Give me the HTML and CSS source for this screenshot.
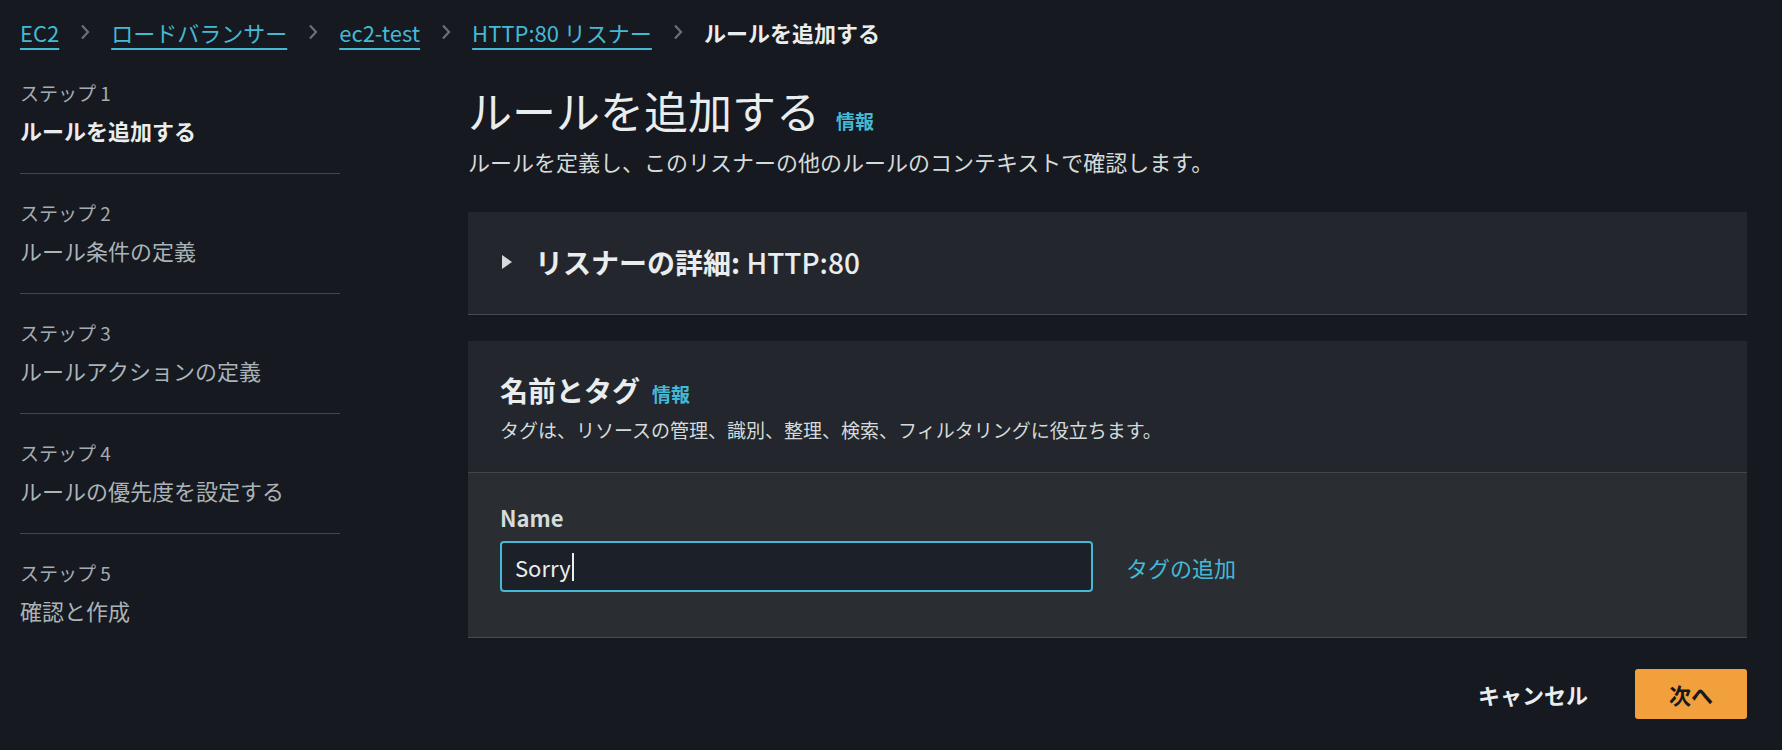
FILE: index.html
```html
<!DOCTYPE html>
<html lang="ja">
  <head>
    <meta charset="UTF-8" />
    <meta name="viewport" content="width=device-width, initial-scale=1.0" />
    <title>ルールを追加する</title>

    <link rel="stylesheet" href="styles.css">
  </head>

  <body>
    <nav class="breadcrumbs">
      <a href="#">EC2</a>
      <svg class="crumb-sep" width="10" height="16" viewBox="0 0 10 16"><path d="M2 1.5 8 8 2 14.5" /></svg>
      <a href="#">ロードバランサー</a>
      <svg class="crumb-sep" width="10" height="16" viewBox="0 0 10 16"><path d="M2 1.5 8 8 2 14.5" /></svg>
      <a href="#">ec2-test</a>
      <svg class="crumb-sep" width="10" height="16" viewBox="0 0 10 16"><path d="M2 1.5 8 8 2 14.5" /></svg>
      <a href="#">HTTP:80 リスナー</a>
      <svg class="crumb-sep" width="10" height="16" viewBox="0 0 10 16"><path d="M2 1.5 8 8 2 14.5" /></svg>
      <span class="crumb-current">ルールを追加する</span>
    </nav>

    <div class="wizard">
      <ol class="steps">
        <li class="step active">
          <small>ステップ 1</small>
          <span>ルールを追加する</span>
        </li>
        <li class="step">
          <small>ステップ 2</small>
          <span>ルール条件の定義</span>
        </li>
        <li class="step">
          <small>ステップ 3</small>
          <span>ルールアクションの定義</span>
        </li>
        <li class="step">
          <small>ステップ 4</small>
          <span>ルールの優先度を設定する</span>
        </li>
        <li class="step">
          <small>ステップ 5</small>
          <span>確認と作成</span>
        </li>
      </ol>

      <main class="form">
        <h1>ルールを追加する<a class="info" href="#">情報</a></h1>
        <p class="lead">ルールを定義し、このリスナーの他のルールのコンテキストで確認します。</p>

        <section class="panel">
          <h2 class="expander">
            <svg width="12" height="16" viewBox="0 0 12 16"><path d="M1 1 11 8 1 15Z" /></svg>
            <span>リスナーの詳細: <span class="listener">HTTP:80</span></span>
          </h2>
        </section>

        <section class="panel">
          <header class="panel-head">
            <h2>名前とタグ<a class="info" href="#">情報</a></h2>
            <p>タグは、リソースの管理、識別、整理、検索、フィルタリングに役立ちます。</p>
          </header>
          <div class="panel-body">
            <label>Name</label>
            <div class="tag-row">
              <div class="field">Sorry<span class="caret"></span></div>
              <a href="#">タグの追加</a>
            </div>
          </div>
        </section>

        <div class="actions">
          <button class="btn-link">キャンセル</button>
          <button class="btn-primary">次へ</button>
        </div>
      </main>
    </div>
  </body>
</html>
```

FILE: styles.css
```css
html,
body {
  margin: 0;
  padding: 0;
}

body {
  background: #16191f;
  color: #d5dbdb;
  font-family: "Noto Sans CJK JP", "Noto Sans", sans-serif;
  font-size: 22px;
  line-height: 32px;
  padding: 0 35px 0 20px;
}

a {
  color: #44b9d6;
  text-decoration: none;
}

.breadcrumbs {
  display: flex;
  align-items: center;
  padding-top: 16px;
  line-height: 32px;
}

.breadcrumbs a {
  text-decoration: underline;
  text-decoration-thickness: 2px;
  text-underline-offset: 6px;
}

.crumb-sep {
  margin: 0 21px;
  fill: none;
  stroke: #687078;
  stroke-width: 2.2;
}

.crumb-current {
  font-weight: 700;
  color: #eaeded;
}

.wizard {
  display: grid;
  grid-template-columns: 320px 1fr;
  column-gap: 128px;
  margin-top: 6px;
}

.steps {
  list-style: none;
  margin: 0;
  padding: 0;
}

.step {
  padding: 26px 0 27px;
}

.step + .step {
  border-top: 1px solid #414750;
}

.step small {
  display: block;
  font-size: 19px;
  line-height: 26px;
  margin-bottom: 8px;
  color: #a3abb3;
}

.step span {
  display: block;
  color: #aab4b8;
}

.step.active span {
  font-weight: 700;
  color: #eaeded;
}

.form h1 {
  margin: 28px 0 0;
  font-size: 44px;
  line-height: 56px;
  font-weight: 400;
  color: #eaeded;
}

.info {
  font-size: 19px;
  line-height: 1;
  font-weight: 700;
  margin-left: 16px;
}

.lead {
  margin: 7px 0 35px;
}

.panel {
  background: #23272d;
  box-shadow: 0 1px 0 #434c58;
}

.panel + .panel {
  margin-top: 27px;
}

.panel h2 {
  margin: 0;
  font-size: 28px;
  line-height: 38px;
  font-weight: 700;
  color: #eaeded;
}

.expander {
  display: flex;
  align-items: center;
  gap: 22px;
  padding: 31px 33px 33px;
}

.expander svg {
  fill: #d5dbdb;
}

.listener {
  font-weight: 500;
}

.panel-head {
  padding: 30px 32px 29px;
  border-bottom: 1px solid #41464d;
}

.panel-head .info {
  margin-left: 12px;
}

.panel-head p {
  margin: 8px 0 0;
  font-size: 19px;
  line-height: 26px;
}

.panel-body {
  background: #2a2e33;
  padding: 28px 32px 45px;
}

.panel-body label {
  display: block;
  font-weight: 700;
}

.tag-row {
  display: flex;
  align-items: center;
  gap: 33px;
  margin-top: 8px;
}

.field {
  box-sizing: border-box;
  width: 593px;
  height: 51px;
  display: flex;
  align-items: center;
  padding: 0 13px;
  border: 2px solid #44b9d6;
  border-radius: 4px;
  background: #1b2029;
  color: #eaeded;
}

.caret {
  display: inline-block;
  width: 2px;
  height: 28px;
  margin-left: 1px;
  background: #eaeded;
}

.actions {
  display: flex;
  justify-content: flex-end;
  gap: 13px;
  margin-top: 32px;
}

.actions button {
  height: 50px;
  padding: 0 32px;
  border: 2px solid transparent;
  border-radius: 3px;
  font-family: inherit;
  font-size: 22px;
  font-weight: 700;
  cursor: pointer;
}

.btn-link {
  background: none;
  color: #eaeded;
}

.btn-primary {
  background: #f2a03b;
  border-color: #f2a03b;
  color: #16191f;
}
```
